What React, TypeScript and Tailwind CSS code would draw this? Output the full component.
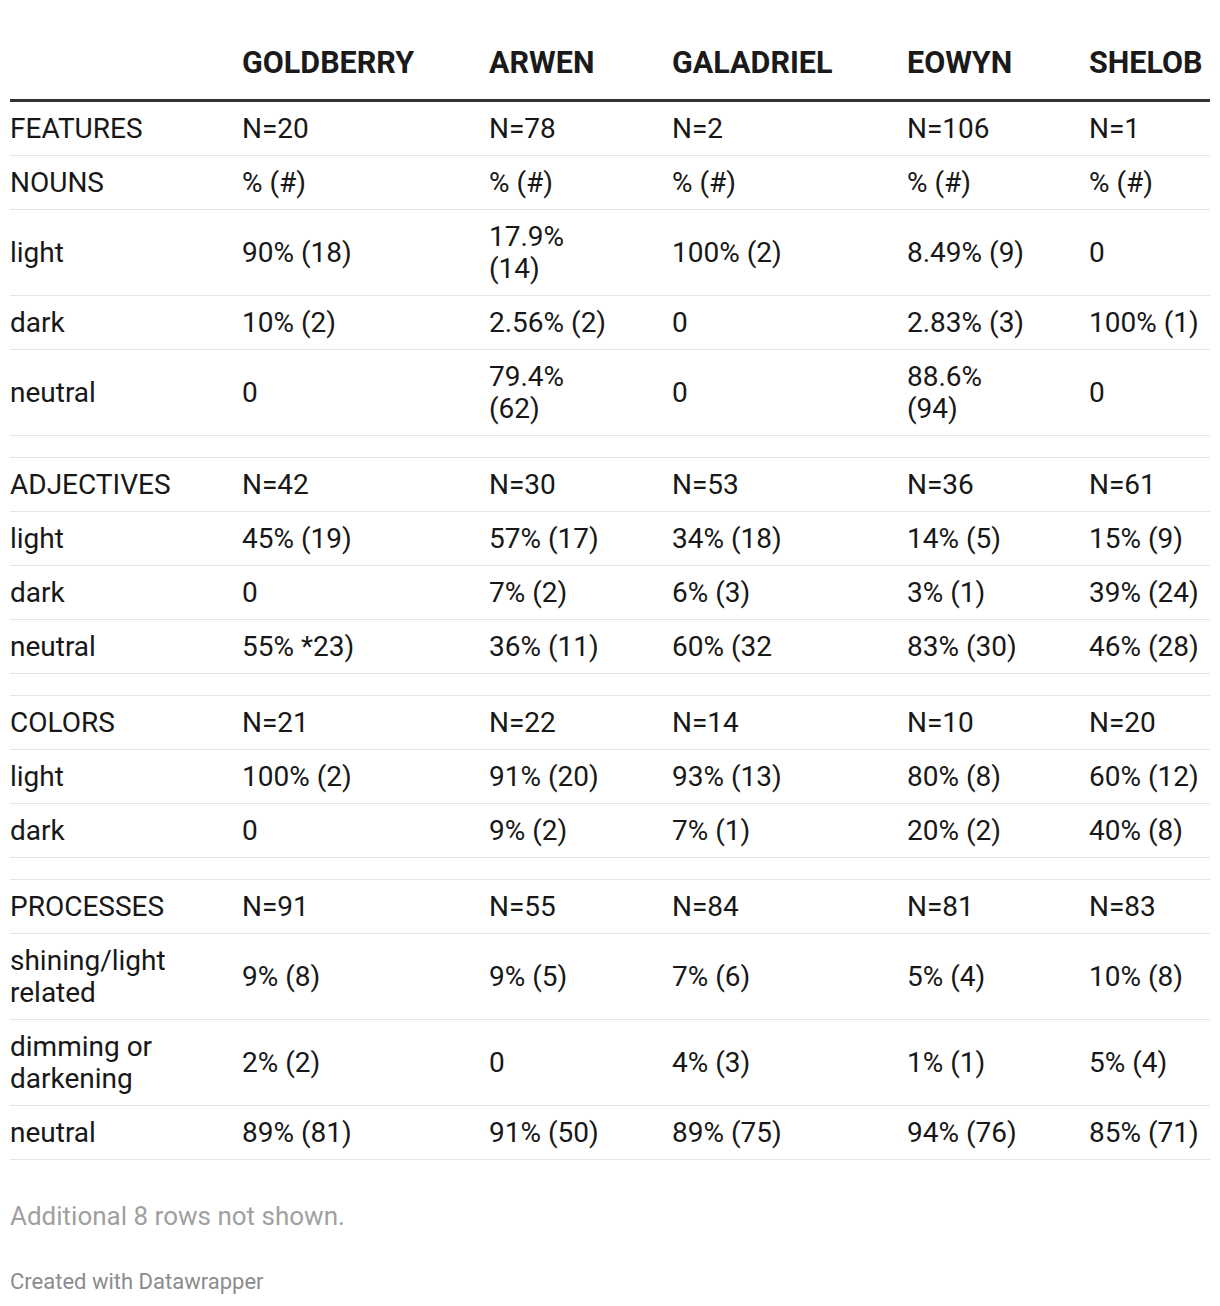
import React from 'react';

type Row = string[] | 'gap';

const headers = ['', 'GOLDBERRY', 'ARWEN', 'GALADRIEL', 'EOWYN', 'SHELOB'];

const rows: Row[] = [
    ['FEATURES', 'N=20', 'N=78', 'N=2', 'N=106', 'N=1'],
    ['NOUNS', '% (#)', '% (#)', '% (#)', '% (#)', '% (#)'],
    ['light', '90% (18)', '17.9%\n(14)', '100% (2)', '8.49% (9)', '0'],
    ['dark', '10% (2)', '2.56% (2)', '0', '2.83% (3)', '100% (1)'],
    ['neutral', '0', '79.4%\n(62)', '0', '88.6%\n(94)', '0'],
    'gap',
    ['ADJECTIVES', 'N=42', 'N=30', 'N=53', 'N=36', 'N=61'],
    ['light', '45% (19)', '57% (17)', '34% (18)', '14% (5)', '15% (9)'],
    ['dark', '0', '7% (2)', '6% (3)', '3% (1)', '39% (24)'],
    ['neutral', '55% *23)', '36% (11)', '60% (32', '83% (30)', '46% (28)'],
    'gap',
    ['COLORS', 'N=21', 'N=22', 'N=14', 'N=10', 'N=20'],
    ['light', '100% (2)', '91% (20)', '93% (13)', '80% (8)', '60% (12)'],
    ['dark', '0', '9% (2)', '7% (1)', '20% (2)', '40% (8)'],
    'gap',
    ['PROCESSES', 'N=91', 'N=55', 'N=84', 'N=81', 'N=83'],
    ['shining/light\nrelated', '9% (8)', '9% (5)', '7% (6)', '5% (4)', '10% (8)'],
    ['dimming or\ndarkening', '2% (2)', '0', '4% (3)', '1% (1)', '5% (4)'],
    ['neutral', '89% (81)', '91% (50)', '89% (75)', '94% (76)', '85% (71)'],
];

const widths = ['w-[232px]', 'w-[247px]', 'w-[183px]', 'w-[235px]', 'w-[182px]', 'w-[121px]'];

export default function App() {
    return (
        <div className="bg-white px-[10px] pt-[37px] pb-[12px] text-[#181818]" style={{ fontFamily: 'Roboto, "Liberation Sans", sans-serif' }}>
            <table className="w-[1200px] table-fixed border-collapse text-[28px] leading-[32px]">
                <colgroup>
                    {widths.map((w, i) => (
                        <col key={i} className={w} />
                    ))}
                </colgroup>
                <thead>
                    <tr className="border-b-[3px] border-[#333333]">
                        {headers.map((h, i) => (
                            <th key={i} className="whitespace-nowrap pb-[20px] pt-[10px] text-left text-[30.5px] font-bold text-[#1a1a1a]">
                                {h}
                            </th>
                        ))}
                    </tr>
                </thead>
                <tbody>
                    {rows.map((r, i) =>
                        r === 'gap' ? (
                            <tr key={i} className="border-b border-[#e5e5e5]">
                                <td colSpan={6} className="h-[22px] p-0"></td>
                            </tr>
                        ) : (
                            <tr key={i} className="border-b border-[#e5e5e5]">
                                {r.map((c, j) => (
                                    <td key={j} className="whitespace-pre-line pb-[10px] pt-[11px] align-middle">
                                        {c}
                                    </td>
                                ))}
                            </tr>
                        )
                    )}
                </tbody>
            </table>
            <p className="mt-[40px] text-[26px] leading-[32px] text-[#a0a0a0]">Additional 8 rows not shown.</p>
            <p className="mt-[37px] text-[22px] leading-[26px] text-[#8c8c8c]">Created with Datawrapper</p>
        </div>
    );
}
